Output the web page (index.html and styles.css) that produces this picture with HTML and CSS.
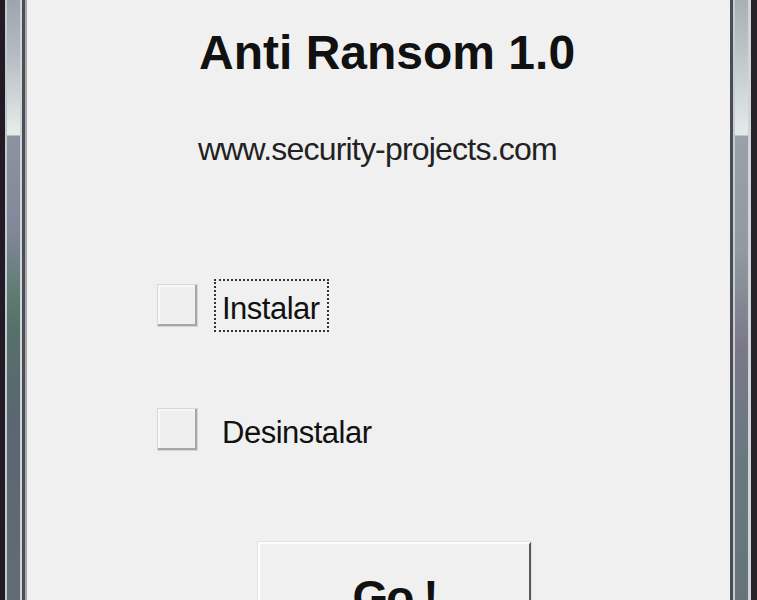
FILE: index.html
```html
<!DOCTYPE html>
<html lang="en">
<head>
    <meta charset="UTF-8">
    <meta name="viewport" content="width=device-width, initial-scale=1.0">
    <title>Anti Ransom 1.0</title>
    <link rel="stylesheet" href="styles.css">
</head>
<body>
    <div class="frame frame-left"></div>
    <div class="window">
        <h1 class="title">Anti Ransom 1.0</h1>
        <div class="site">www.security-projects.com</div>

        <label class="option option-first">
            <span class="box"></span>
            <span class="caption focused">Instalar</span>
        </label>
        <label class="option option-second">
            <span class="box"></span>
            <span class="caption">Desinstalar</span>
        </label>

        <button class="go">Go !</button>
    </div>
    <div class="frame frame-right"></div>
</body>
</html>
```

FILE: styles.css
```css
body {
    display: flex;
    height: 100vh;
    margin: 0;
    overflow: hidden;
    background: #f0f0f0;
    font-family: 'Liberation Sans', Arial, sans-serif;
    color: #111;
}

.frame {
    width: 27px;
    flex-shrink: 0;
}

.frame-left {
    background:
        linear-gradient(to right, #221b26 0 5px, #c4c8d0 5px 7px, transparent 7px 20px, #d0d4da 20px 22px, #4a4e52 22px 25px, #a4a8ac 25px 27px),
        linear-gradient(to bottom, #9ea4ae 0, #b8bec4 60px, #e4eae8 128px, #e4eae8 135px, #8c929e 136px, #82889a 230px, #5c7a6e 300px, #56706a 330px, #5a6670 420px, #626c74 600px);
}

.frame-right {
    background:
        linear-gradient(to right, #4a4e52 0 3px, #c8ccd2 3px 5px, transparent 5px 18px, #d0d4d8 18px 21px, #262428 21px 27px),
        linear-gradient(to bottom, #a8b0b4 0, #c0c8ca 60px, #e2e8ea 128px, #e2e8ea 135px, #9aa0a8 136px, #909aa0 250px, #7a7888 350px, #6a7880 450px, #66747a 600px);
}

.window {
    flex: 1;
    display: flex;
    flex-direction: column;
    align-items: flex-start;
    padding-top: 25px;
    background: #f0f0f0;
}

.title {
    margin: 0 0 0 172px;
    font-size: 48px;
    line-height: 56px;
    font-weight: bold;
}

.site {
    margin: 50px 0 0 171px;
    font-size: 32px;
    line-height: 36px;
    letter-spacing: -0.8px;
    color: #222;
}

.option {
    display: flex;
    align-items: center;
    margin-left: 130px;
}

.option-first {
    margin-top: 112px;
}

.option-second {
    margin-top: 71px;
}

.box {
    width: 41px;
    height: 43px;
    box-sizing: border-box;
    border: 1px solid #d6d6d6;
    background: #efefef;
    box-shadow: inset -2px -2px 0 #a6a6a6, inset 2px 2px 0 #f8f8f8;
}

.caption {
    margin-left: 16px;
    padding: 6px 7px 0 6px;
    border: 2px dotted transparent;
    font-size: 31px;
    line-height: 43px;
    letter-spacing: -0.5px;
}

.caption.focused {
    border-color: #333;
}

.go {
    margin: 86px 0 0 231px;
    width: 273px;
    height: 110px;
    padding: 26px 0 0;
    box-sizing: border-box;
    display: flex;
    justify-content: center;
    align-items: flex-start;
    background: #f0f0f0;
    border: 2px solid;
    border-color: #fdfdfd #5a5a5a #5a5a5a #fdfdfd;
    box-shadow: 0 0 0 1px #e2e2e2;
    font-family: 'Liberation Sans', Arial, sans-serif;
    font-size: 46px;
    font-weight: bold;
    letter-spacing: -2px;
    color: #111;
}
```
